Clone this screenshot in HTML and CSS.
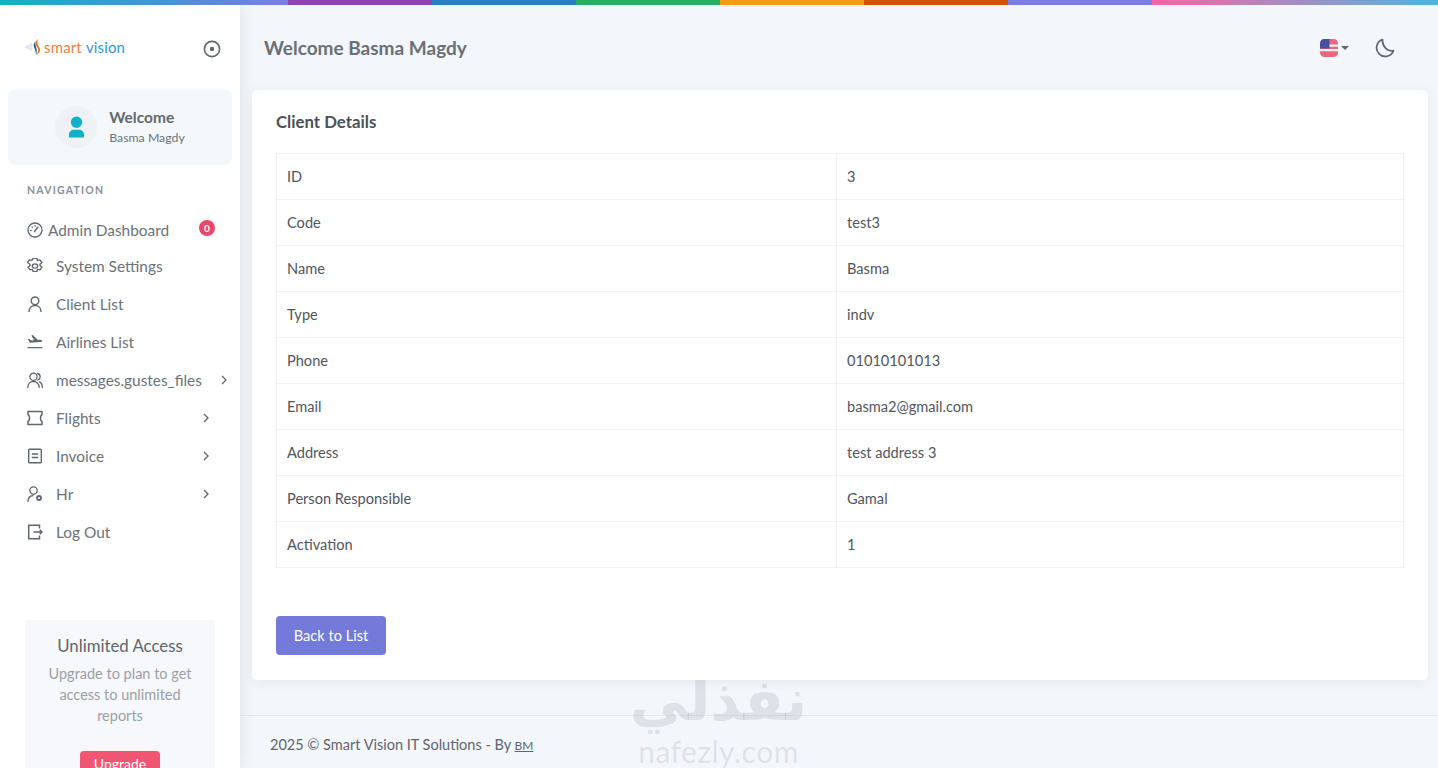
FILE: index.html
```html
<!DOCTYPE html>
<html>
<head>
    <title>Client Details</title>
    <link rel="stylesheet" href="styles.css">
</head>
<body>
    <div class="topbar">
        <div class="seg seg-teal"></div>
        <div class="seg seg-purple"></div>
        <div class="seg seg-blue"></div>
        <div class="seg seg-green"></div>
        <div class="seg seg-orange"></div>
        <div class="seg seg-rust"></div>
        <div class="seg seg-indigo"></div>
        <div class="seg seg-pink"></div>
    </div>

    <div class="layout">
        <aside class="sidebar">
            <div class="brand">
                <div class="logo">
                    <svg width="18" height="18" viewBox="0 0 18 18">
                        <path d="M0 9l8-4v8z" fill="#e4e8ee"/>
                        <path d="M14 1c-3 3-3 5-1 8s1 6-1 8c4-2 5-5 3-8s-2-5-1-8z" fill="#e8711f"/>
                        <path d="M12 3c-2 2-3 4-2 6s2 5 2 8c1-3 1-5 0-8s-1-4 0-6z" fill="#1f5a99"/>
                    </svg>
                    <span class="logo-smart">smart</span>
                    <span class="logo-vision">vision</span>
                </div>
                <svg class="toggle" width="18" height="18" viewBox="0 0 18 18" fill="none" stroke="#5f666e" stroke-width="1.6">
                    <circle cx="9" cy="9" r="7.6"/>
                    <circle cx="9" cy="9" r="2.2" fill="#5f666e" stroke="none"/>
                </svg>
            </div>

            <div class="profile">
                <div class="avatar">
                    <svg width="17" height="22" viewBox="0 0 18 22" fill="#0fb1c9">
                        <circle cx="9" cy="6" r="6"/>
                        <path d="M1 22v-3c0-3 3-5 5-5h6c2 0 5 2 5 5v3z"/>
                    </svg>
                </div>
                <div>
                    <div class="profile-title">Welcome</div>
                    <div class="profile-name">Basma Magdy</div>
                </div>
            </div>

            <div class="nav-label">NAVIGATION</div>

            <ul class="menu">
                <li class="item item-first">
                    <svg class="ico-sm" viewBox="0 0 16 16" fill="none" stroke="#5f666e" stroke-width="1.3" stroke-linecap="round">
                        <circle cx="8" cy="8" r="7"/>
                        <path d="M7.5 9.5L11 5M3.5 8.5h.6M5 5l.4.4M8 3.5v.6"/>
                    </svg>
                    <span class="item-text-sm">Admin Dashboard</span>
                    <span class="badge">0</span>
                </li>
                <li class="item">
                    <svg class="ico" viewBox="2 0.7 12 14.6" preserveAspectRatio="none" fill="none" stroke="#5f666e" stroke-width="1.1" stroke-linejoin="round">
                        <path d="M6.6 1h2.8l.5 2 1.8-.6 1.5 2.5-1.4 1.4v1.4l1.4 1.4-1.5 2.5-1.8-.6-.5 2H6.6l-.5-2-1.8.6-1.5-2.5 1.4-1.4V6.3L2.3 4.9l1.5-2.5 1.8.6z"/>
                        <circle cx="8" cy="8" r="2"/>
                    </svg>
                    <span>System Settings</span>
                </li>
                <li class="item">
                    <svg class="ico" viewBox="0 0 16 16" fill="none" stroke="#5f666e" stroke-width="1.4" stroke-linecap="round">
                        <circle cx="8" cy="4.8" r="3.8"/>
                        <path d="M2 15.5c0-3.5 2.5-6 6-6s6 2.5 6 6"/>
                    </svg>
                    <span>Client List</span>
                </li>
                <li class="item">
                    <svg class="ico" viewBox="0 0 16 16" fill="#5f666e">
                        <path d="M1 5.2l1-.5 2.4 1.8 2.6-.3L4.4 1.5l1.4-.4 4.8 4.6 3 .1c1 .1 1.500.8 1.300 1.400-.2.6-1 .9-2 .9L2.800 8.800z"/>
                        <rect x=".5" y="13" width="15" height="1.3" rx=".6"/>
                    </svg>
                    <span>Airlines List</span>
                </li>
                <li class="item">
                    <svg class="ico" viewBox="0 0 16 16" fill="none" stroke="#5f666e" stroke-width="1.3" stroke-linecap="round">
                        <circle cx="6.5" cy="4.8" r="3.6"/>
                        <path d="M.8 15.5c0-3.5 2.3-6 5.7-6s5.7 2.5 5.7 6M10.500 1.500c1.600.4 2.600 1.700 2.600 3.300s-1 2.800-2.400 3.200M12.500 9.800c1.700.8 2.800 3 2.800 5.700"/>
                    </svg>
                    <span class="item-grow">messages.gustes_files</span>
                    <svg class="chev chev-far" viewBox="0 0 8 12" fill="none" stroke="#5f666e" stroke-width="1.3"><path d="M2 2l4 4-4 4"/></svg>
                </li>
                <li class="item">
                    <svg class="ico" viewBox="0 0 16 16" fill="none" stroke="#5f666e" stroke-width="1.5" stroke-linejoin="round">
                        <path d="M1 1.5h14v3c-2 .8-2 6.2 0 7v3H1v-3c2-.8 2-6.2 0-7z"/>
                    </svg>
                    <span class="item-grow">Flights</span>
                    <svg class="chev" viewBox="0 0 8 12" fill="none" stroke="#5f666e" stroke-width="1.3"><path d="M2 2l4 4-4 4"/></svg>
                </li>
                <li class="item">
                    <svg class="ico" viewBox="0 0 16 16" fill="none" stroke="#5f666e" stroke-width="1.4">
                        <rect x="1.7" y="1.2" width="12.6" height="13.6" rx=".8"/>
                        <path d="M4.8 6h6.4M4.8 9.5h6.4"/>
                    </svg>
                    <span class="item-grow">Invoice</span>
                    <svg class="chev" viewBox="0 0 8 12" fill="none" stroke="#5f666e" stroke-width="1.3"><path d="M2 2l4 4-4 4"/></svg>
                </li>
                <li class="item">
                    <svg class="ico" viewBox="0 0 16 16" fill="none" stroke="#5f666e" stroke-width="1.3" stroke-linecap="round">
                        <circle cx="6.5" cy="4.5" r="3.7"/>
                        <path d="M1 15.5c0-3 1.8-5.5 5-6"/>
                        <circle cx="12" cy="12" r="2" stroke-width="1.8"/>
                    </svg>
                    <span class="item-grow">Hr</span>
                    <svg class="chev" viewBox="0 0 8 12" fill="none" stroke="#5f666e" stroke-width="1.3"><path d="M2 2l4 4-4 4"/></svg>
                </li>
                <li class="item">
                    <svg class="ico" viewBox="0 0 16 16" fill="none" stroke="#5f666e" stroke-width="1.5">
                        <path d="M12.5 4.500V1.200H1.700v13.600h10.800v-3.300"/>
                        <path d="M6.500 8H15M12.800 5.800L15 8l-2.200 2.200"/>
                    </svg>
                    <span>Log Out</span>
                </li>
            </ul>

            <div class="upgrade">
                <div class="upgrade-title">Unlimited Access</div>
                <p class="upgrade-text">Upgrade to plan to get access to unlimited reports</p>
                <a class="upgrade-btn">Upgrade</a>
            </div>
        </aside>

        <main class="main">
            <header class="header">
                <div class="welcome">Welcome Basma Magdy</div>
                <div class="header-tools">
                    <svg class="flag" width="18" height="18" viewBox="0 0 19 19">
                        <rect width="19" height="19" rx="5" fill="#f4eef0"/>
                        <path d="M0 5C0 2 2 0 5 0h9c3 0 5 2 5 5v.8H0zM0 8.2h19v2.300H0zM0 13h19v1c0 3-2 5-5 5H5c-3 0-5-2-5-5z" fill="#e8697c"/>
                        <path d="M0 5c0-3 2-5 5-5h5v10H0z" fill="#4a4f9c"/>
                    </svg>
                    <span class="caret"></span>
                    <svg class="moon" width="20" height="20" viewBox="0 0 20 20" fill="none" stroke="#5f666e" stroke-width="1.7" stroke-linejoin="round">
                        <path d="M7.5 1.500a8.700 8.700 0 1 0 11 11.200c-5.500 1.300-11.500-4-11-11.200z"/>
                    </svg>
                </div>
            </header>

            <section class="card">
                <h2 class="card-title">Client Details</h2>
                <table class="details">
                    <tr><td>ID</td><td>3</td></tr>
                    <tr><td>Code</td><td>test3</td></tr>
                    <tr><td>Name</td><td>Basma</td></tr>
                    <tr><td>Type</td><td>indv</td></tr>
                    <tr><td>Phone</td><td>01010101013</td></tr>
                    <tr><td>Email</td><td>basma2@gmail.com</td></tr>
                    <tr><td>Address</td><td>test address 3</td></tr>
                    <tr><td>Person Responsible</td><td>Gamal</td></tr>
                    <tr><td>Activation</td><td>1</td></tr>
                </table>
                <a class="back-btn">Back to List</a>
            </section>

            <footer class="footer">2025 &copy; Smart Vision IT Solutions - By <u class="footer-by">BM</u></footer>

            <div class="watermark">
                <div class="watermark-ar">نفذلي</div>
                <div class="watermark-en">nafezly.com</div>
            </div>
        </main>
    </div>
</body>
</html>
```

FILE: styles.css
```css
* {
    box-sizing: border-box;
}

html,
body {
    height: 768px;
    margin: 0;
    overflow: hidden;
}

body {
    background-color: #f3f6fa;
    font-family: Lato, "Open Sans", Arial, sans-serif;
    font-size: 14.6px;
    color: #50565c;
}

.topbar {
    display: flex;
    height: 5px;
}

.seg {
    flex: 144;
}

.seg-teal {
    flex: 288;
    background: linear-gradient(90deg, #0fb9c4, #7a7fdc);
}

.seg-purple {
    background-color: #8e44ad;
}

.seg-blue {
    background-color: #2980b9;
}

.seg-green {
    background-color: #27ae60;
}

.seg-orange {
    background-color: #f39c12;
}

.seg-rust {
    background-color: #d35400;
}

.seg-indigo {
    background-color: #7a7fdc;
}

.seg-pink {
    flex: 286;
    background: linear-gradient(90deg, #f765a3, #4fb5e0);
}

.layout {
    display: flex;
    height: 763px;
}

/* sidebar */
.sidebar {
    width: 240px;
    flex-shrink: 0;
    background-color: #fff;
    box-shadow: 0 0 14px rgba(60, 80, 100, 0.13);
    z-index: 2;
    overflow: hidden;
}

.brand {
    display: flex;
    justify-content: space-between;
    align-items: center;
    height: 85px;
    padding: 0 19px 2px 24px;
}

.logo {
    display: flex;
    align-items: center;
    font-size: 15px;
    letter-spacing: 0.15px;
}

.logo svg {
    margin-right: 2px;
}

.logo-smart {
    color: #e8823a;
    margin-right: 4px;
}

.logo-vision {
    color: #2f97d6;
}

.toggle {
    margin-top: 4px;
}

.profile {
    display: flex;
    justify-content: center;
    align-items: center;
    gap: 12px;
    height: 75px;
    margin: 0 8px;
    padding-bottom: 2px;
    background-color: #f5f8fb;
    border-radius: 6px;
}

.avatar {
    display: flex;
    justify-content: center;
    align-items: center;
    width: 42px;
    height: 42px;
    border-radius: 50%;
    background-color: #eef2f5;
}

.profile-title {
    font-size: 15.5px;
    font-weight: 700;
    color: #62686e;
    line-height: 22px;
}

.profile-name {
    font-size: 12.3px;
    color: #6c7279;
    line-height: 20px;
}

.nav-label {
    padding: 18px 0 0 27px;
    font-size: 10.5px;
    font-weight: 700;
    letter-spacing: 1.2px;
    color: #8a9097;
    line-height: 14px;
}

.menu {
    list-style: none;
    margin: 16px 0 0;
    padding: 0;
}

.item {
    display: flex;
    align-items: center;
    height: 38px;
    padding-left: 27px;
    padding-right: 30px;
    font-size: 15.4px;
    color: #6c7279;
}

.item-first {
    height: 34px;
    padding-right: 25px;
}

.ico {
    width: 16px;
    height: 16px;
    margin-right: 13px;
    flex-shrink: 0;
}

.ico-sm {
    width: 16px;
    height: 16px;
    margin-right: 5px;
    flex-shrink: 0;
}

.item-text-sm,
.item-grow {
    flex: 1;
    white-space: nowrap;
}

.badge {
    display: flex;
    justify-content: center;
    align-items: center;
    width: 16px;
    height: 16px;
    margin-top: -4px;
    border-radius: 50%;
    background-color: #e9486a;
    color: #fff;
    font-size: 10px;
    font-weight: 700;
}

.chev {
    width: 8px;
    height: 12px;
    flex-shrink: 0;
}

.chev-far {
    margin-right: -18px;
}

.upgrade {
    width: 190px;
    height: 180px;
    margin: 69px 0 0 25px;
    padding: 16px 14px 0;
    background-color: #f6f8fb;
    border-radius: 4px;
    text-align: center;
}

.upgrade-title {
    font-size: 16.8px;
    color: #5f656c;
    line-height: 20px;
}

.upgrade-text {
    margin: 7px -4px 0;
    font-size: 14.5px;
    line-height: 21px;
    color: #9a9fa6;
}

.upgrade-btn {
    display: block;
    width: 80px;
    height: 34px;
    margin: 25px auto 0;
    background-color: #f05672;
    border-radius: 4px;
    color: #fff;
    font-size: 14px;
    line-height: 26px;
}

/* main */
.main {
    position: relative;
    flex: 1;
    display: flex;
    flex-direction: column;
    min-width: 0;
}

.header {
    display: flex;
    justify-content: space-between;
    align-items: center;
    height: 85px;
    padding: 0 43px 0 24px;
}

.welcome {
    font-size: 19px;
    font-weight: 700;
    color: #6a7076;
}

.header-tools {
    display: flex;
    align-items: center;
}

.flag {
    margin-right: 3px;
}

.caret {
    width: 0;
    height: 0;
    margin-right: 26px;
    border-left: 4px solid transparent;
    border-right: 4px solid transparent;
    border-top: 4px solid #5f666e;
}

.card {
    position: relative;
    z-index: 1;
    height: 590px;
    margin: 0 10px 0 12px;
    padding: 22px 24px 0;
    background-color: #fff;
    border-radius: 6px;
    box-shadow: 0 2px 12px rgba(60, 80, 100, 0.08);
}

.card-title {
    margin: 0 0 21px;
    font-size: 16.8px;
    font-weight: 700;
    color: #4b5157;
    line-height: 20px;
}

.details {
    width: 100%;
    border-collapse: collapse;
    table-layout: fixed;
}

.details td {
    height: 46px;
    padding: 0 10px;
    border: 1px solid #f0f2f5;
    line-height: 20px;
}

.details td:first-child {
    width: 560px;
}

.back-btn {
    display: block;
    width: 110px;
    height: 39px;
    margin-top: 48px;
    background-color: #737ada;
    border-radius: 4px;
    color: #fff;
    text-align: center;
    line-height: 39px;
}

.footer {
    margin-top: 35px;
    padding: 20px 30px 0;
    border-top: 1px solid #e5e9ee;
    font-size: 14.5px;
    color: #5f656c;
}

.footer-by {
    font-size: 12px;
}

.watermark {
    position: absolute;
    left: 372px;
    top: 670px;
    width: 213px;
    text-align: center;
    color: rgba(120, 125, 135, 0.17);
    pointer-events: none;
}

.watermark-ar {
    font-family: "DejaVu Sans", sans-serif;
    font-size: 58px;
    font-weight: 700;
    line-height: 50px;
}

.watermark-en {
    margin-top: 11px;
    font-size: 30px;
    line-height: 30px;
    letter-spacing: 0.5px;
}
```
